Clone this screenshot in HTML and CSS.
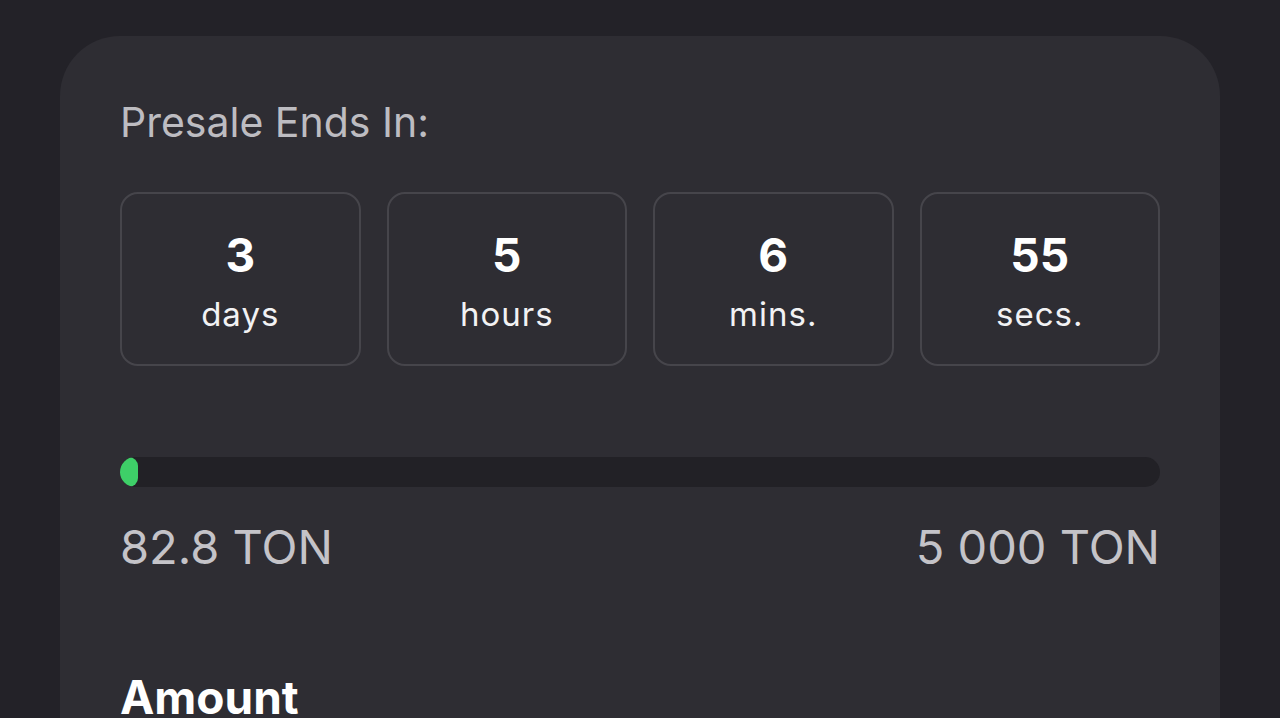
FILE: index.html
```html
<!DOCTYPE html>
<html lang="en">
<head>
    <meta charset="UTF-8">
    <meta name="viewport" content="width=device-width, initial-scale=1.0">
    <title>Presale</title>
    <link rel="stylesheet" href="styles.css">
</head>
<body>

<div class="card">
    <div class="title">Presale Ends In:</div>

    <div class="timer">
        <div class="cell"><div class="num">3</div><div class="unit">days</div></div>
        <div class="cell"><div class="num">5</div><div class="unit">hours</div></div>
        <div class="cell"><div class="num">6</div><div class="unit">mins.</div></div>
        <div class="cell"><div class="num">55</div><div class="unit">secs.</div></div>
    </div>

    <div class="bar">
        <div class="fill" style="width: 18px"></div>
    </div>
    <div class="raised">
        <span>82.8 TON</span>
        <span>5 000 TON</span>
    </div>

    <div class="amount">Amount</div>
</div>

</body>
</html>
```

FILE: styles.css
```css
body {
    font-family: Inter, "Noto Sans", sans-serif;
    background-color: #232228;
    margin: 0;
    padding: 36px 60px 0;
    height: 718px;
    box-sizing: border-box;
    overflow: hidden;
}
.card {
    background: #2e2d33;
    border-radius: 60px 60px 0 0;
    padding: 62px 60px 0;
    height: 800px;
}
.title {
    font-size: 41px;
    color: #bdbcc1;
    line-height: 48px;
}
.timer {
    display: grid;
    grid-template-columns: repeat(4, 1fr);
    gap: 26px;
    margin-top: 46px;
}
.cell {
    height: 174px;
    padding-top: 36px;
    border: 2px solid #46454b;
    border-radius: 18px;
    box-sizing: border-box;
    display: flex;
    flex-direction: column;
    align-items: center;
    color: #fff;
}
.num {
    font-size: 46px;
    font-weight: 700;
    line-height: 50px;
}
.unit {
    font-size: 33px;
    line-height: 40px;
    letter-spacing: 1px;
    margin-top: 14px;
    color: #f2f2f4;
}
.bar {
    margin-top: 91px;
    height: 30px;
    border-radius: 15px;
    background: #222126;
    overflow: hidden;
}
.fill {
    height: 100%;
    background: #3ecf68;
    border-radius: 15px;
}
.raised {
    display: flex;
    justify-content: space-between;
    margin-top: 30px;
    font-size: 47px;
    line-height: 60px;
    color: #c4c3c8;
}
.amount {
    margin-top: 92px;
    font-size: 46px;
    line-height: 56px;
    font-weight: 700;
    color: #fff;
}
```
